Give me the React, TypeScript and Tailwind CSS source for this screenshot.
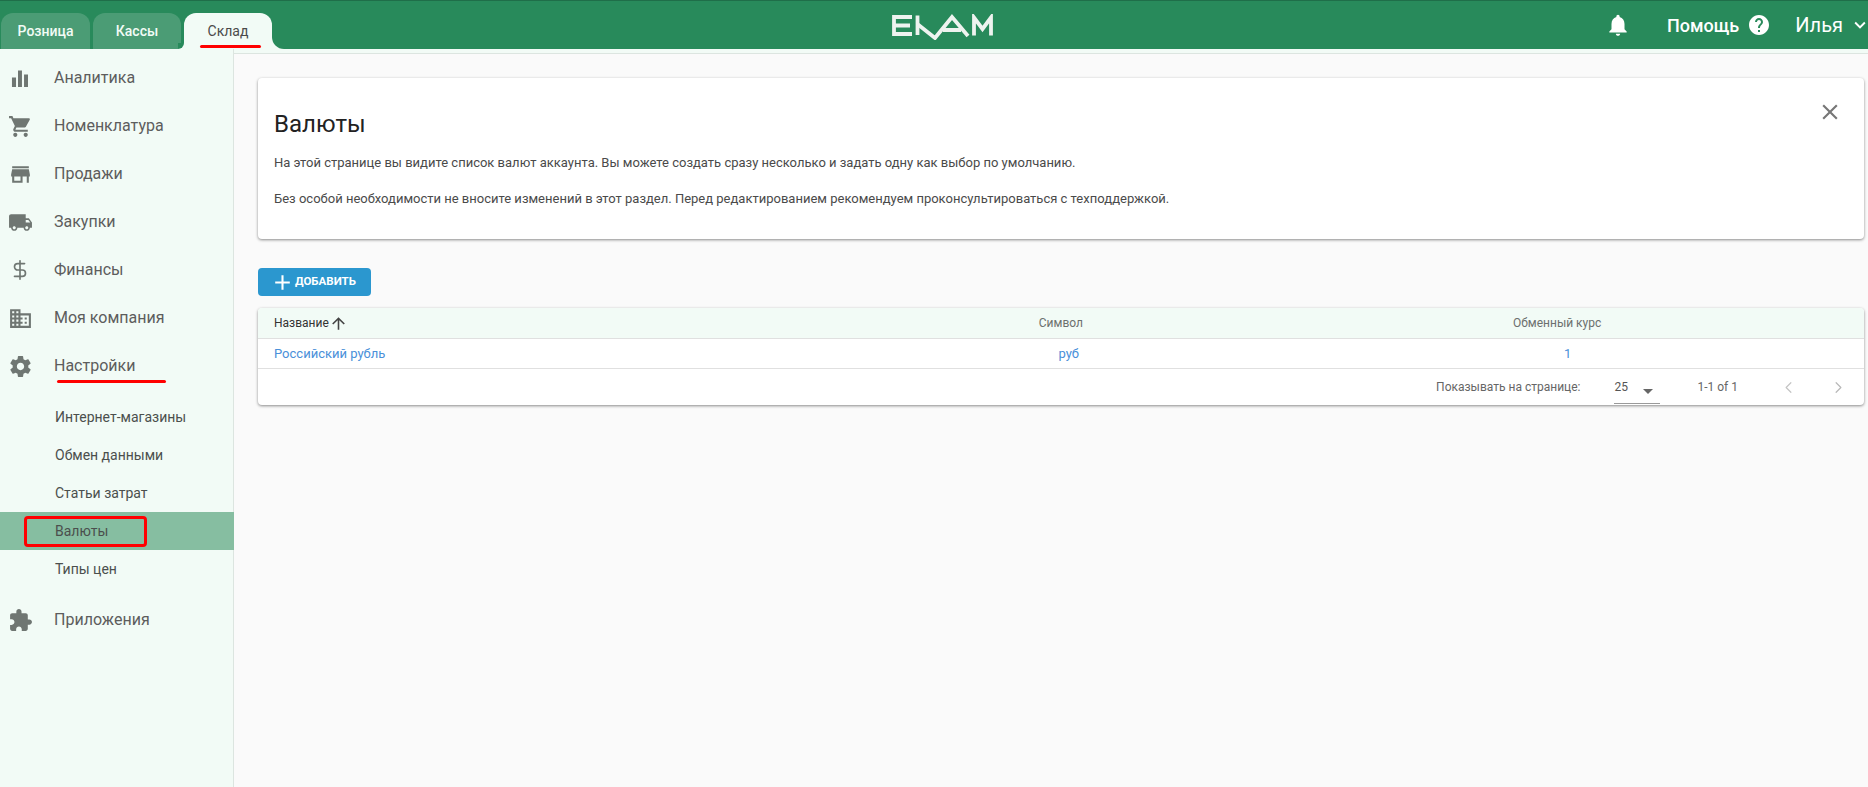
import React from "react";
import { ChevronLeft, ChevronRight, DollarSign } from "lucide-react";

const P = ({ d, className = "" }: { d: string; className?: string }) => (
  <svg viewBox="0 0 24 24" className={"w-6 h-6 fill-current " + className}><path d={d} /></svg>
);

const icons = {
  chart: "M3.8 11h3.9v9.1H3.8zM9.6 4.3h3.8v15.8H9.6zM15.4 8.2h3.8v11.9h-3.8z",
  cart: "M7 18c-1.1 0-1.99.9-1.99 2S5.9 22 7 22s2-.9 2-2-.9-2-2-2zM1 2v2h2l3.6 7.59-1.35 2.45c-.16.28-.25.61-.25.96 0 1.1.9 2 2 2h12v-2H7.42c-.14 0-.25-.11-.25-.25l.03-.12.9-1.63h7.45c.75 0 1.41-.41 1.75-1.03l3.58-6.49c.08-.14.12-.31.12-.48 0-.55-.45-1-1-1H5.21l-.94-2H1zm16 16c-1.1 0-1.99.9-1.99 2s.89 2 1.99 2 2-.9 2-2-.9-2-2-2z",
  store: "M20 4H4v2h16V4zm1 10v-2l-1-5H4l-1 5v2h1v6h10v-6h4v6h2v-6h1zm-9 4H6v-4h6v4z",
  truck: "M20 8h-3V4H3c-1.1 0-2 .9-2 2v11h2c0 1.66 1.34 3 3 3s3-1.34 3-3h6c0 1.66 1.34 3 3 3s3-1.34 3-3h2v-5l-3-4zM6 18.5c-.83 0-1.5-.67-1.5-1.5s.67-1.5 1.5-1.5 1.5.67 1.5 1.5-.67 1.5-1.5 1.5zm13.5-9l1.96 2.5H17V9.5h2.5zm-1.5 9c-.83 0-1.5-.67-1.5-1.5s.67-1.5 1.5-1.5 1.5.67 1.5 1.5-.67 1.5-1.5 1.5z",
  domain: "M12 7V3H2v18h20V7H12zM6 19H4v-2h2v2zm0-4H4v-2h2v2zm0-4H4V9h2v2zm0-4H4V5h2v2zm4 12H8v-2h2v2zm0-4H8v-2h2v2zm0-4H8V9h2v2zm0-4H8V5h2v2zm10 12h-8v-2h2v-2h-2v-2h2v-2h-2V9h8v10zm-2-8h-2v2h2v-2zm0 4h-2v2h2v-2z",
  gear: "M19.43 12.98c.04-.32.07-.64.07-.98s-.03-.66-.07-.98l2.11-1.65c.19-.15.24-.42.12-.64l-2-3.46c-.12-.22-.39-.3-.61-.22l-2.49 1c-.52-.4-1.08-.73-1.69-.98l-.38-2.65C14.46 2.18 14.25 2 14 2h-4c-.25 0-.46.18-.49.42l-.38 2.65c-.61.25-1.17.59-1.69.98l-2.49-1c-.23-.09-.49 0-.61.22l-2 3.46c-.13.22-.07.49.12.64l2.11 1.65c-.04.32-.07.65-.07.98s.03.66.07.98l-2.11 1.65c-.19.15-.24.42-.12.64l2 3.46c.12.22.39.3.61.22l2.49-1c.52.4 1.08.73 1.69.98l.38 2.65c.03.24.24.42.49.42h4c.25 0 .46-.18.49-.42l.38-2.65c.61-.25 1.17-.59 1.69-.98l2.49 1c.23.09.49 0 .61-.22l2-3.46c.12-.22.07-.49-.12-.64l-2.11-1.65zM12 15.5c-1.93 0-3.5-1.57-3.5-3.5s1.57-3.5 3.5-3.5 3.5 1.57 3.5 3.5-1.57 3.5-3.5 3.5z",
  puzzle: "M20.5 11H19V7c0-1.1-.9-2-2-2h-4V3.5C13 2.12 11.88 1 10.5 1S8 2.12 8 3.5V5H4c-1.1 0-1.99.9-1.99 2v3.8H3.5c1.49 0 2.7 1.21 2.7 2.7s-1.21 2.7-2.7 2.7H2V20c0 1.1.9 2 2 2h3.8v-1.5c0-1.49 1.21-2.7 2.7-2.7 1.49 0 2.7 1.21 2.7 2.7V22H17c1.1 0 2-.9 2-2v-4h1.5c1.38 0 2.5-1.12 2.5-2.5S21.88 11 20.5 11z",
  bell: "M12 22c1.1 0 2-.9 2-2h-4c0 1.1.89 2 2 2zm6-6v-5c0-3.07-1.64-5.64-4.5-6.32V4c0-.83-.67-1.5-1.5-1.5s-1.5.67-1.5 1.5v.68C7.63 5.36 6 7.92 6 11v5l-2 2v1h16v-1l-2-2z",
  help: "M12 2C6.48 2 2 6.48 2 12s4.48 10 10 10 10-4.48 10-10S17.52 2 12 2zm1 17h-2v-2h2v2zm2.07-7.75l-.9.92C13.45 12.9 13 13.5 13 15h-2v-.5c0-1.1.45-2.1 1.17-2.83l1.24-1.26c.37-.36.59-.86.59-1.41 0-1.1-.9-2-2-2s-2 .9-2 2H8c0-2.21 1.79-4 4-4s4 1.79 4 4c0 .88-.36 1.68-.93 2.25z",
  expand: "M16.59 8.59L12 13.17 7.41 8.59 6 10l6 6 6-6z",
  close: "M19 6.41L17.59 5 12 10.59 6.41 5 5 6.41 10.59 12 5 17.59 6.41 19 12 13.41 17.59 19 19 17.59 13.41 12z",
  add: "M19 13h-6v6h-2v-6H5v-2h6V5h2v6h6v2z",
  up: "M4 12l1.41 1.41L11 7.83V20h2V7.83l5.58 5.59L20 12l-8-8-8 8z",
};

const Row = ({ icon, label }: { icon: React.ReactNode; label: string }) => (
  <div className="h-12 flex items-center text-[#5d5d5d]">
    <div className="w-[54px] pl-2 shrink-0 flex text-[#6f7672]">{icon}</div>
    <span className="text-base">{label}</span>
  </div>
);

const Main = ({ icon, label }: { icon: string; label: string }) => (
  <Row icon={<P d={icon} className="w-[25px] h-[25px]" />} label={label} />
);

const Sub = ({ label, active }: { label: string; active?: boolean }) => (
  <div className={"h-[38px] flex items-center pl-[55px] text-sm text-[#4b4f4d] " + (active ? "bg-[#86bea1] -mr-px" : "")}>{label}</div>
);

const Tab = ({ label, active, wide }: { label: string; active?: boolean; wide?: boolean }) => (
  <div className={"h-9 rounded-t-xl flex items-center justify-center text-sm relative " + (wide ? "w-[89px] " : "w-[88px] ") + (active ? "bg-[#f2fbf6] text-[#4a4a4a]" : "bg-[#4b9c75] text-[#f2fbf6] font-medium")}>
    {label}
  </div>
);

export default function App() {
  return (
    <div className="w-[1868px] h-[787px] overflow-hidden flex flex-col bg-[#f2fbf6] font-['Roboto',sans-serif] relative">
      <header className="h-[49px] shrink-0 bg-[#288a5b] border-t border-[#1f6e49] flex items-end relative text-white">
        <div className="flex gap-[3px] pl-px">
          <Tab label="Розница" wide />
          <Tab label="Кассы" />
          <div className="relative">
            <Tab label="Склад" active />
            <div className="absolute right-[-12px] bottom-0 w-3 h-3 bg-[#f2fbf6]"><div className="w-3 h-3 bg-[#288a5b] rounded-bl-xl" /></div>
            <div className="absolute left-[-6px] bottom-0 w-1.5 h-1.5 bg-[#f2fbf6]"><div className="w-1.5 h-1.5 bg-[#288a5b] rounded-br-md" /></div>
          </div>
        </div>
        <div className="flex-1" />
        <div className="flex items-center h-12 -mr-[3px]">
          <P d={icons.bell} className="mr-9 w-[26px] h-[26px]" />
          <span className="text-[18px] font-medium">Помощь</span>
          <P d={icons.help} className="ml-2 mr-6" />
          <span className="font-normal text-[20px]">Илья</span>
          <P d={icons.expand} className="ml-[6px] w-[22px] h-[22px]" />
        </div>
        <svg viewBox="0 0 102 26" className="absolute left-[891px] top-[13px] w-[102px] h-[26px]" fill="none" stroke="#eef3ef" strokeWidth="3.8">
          <path d="M21 3H3v17h18M3 11.5h16" />
          <path d="M26.5 1.5v19.5" />
          <path d="M27 10.5l17 13.5L61 3l16 19M52 16h18" />
          <path d="M83 21.5V3.5L91.5 15 100 3.5v18" />
        </svg>
      </header>

      <div className="flex flex-1 min-h-0">
        <aside className="w-[234px] shrink-0 border-r border-[#dce5e0] pt-[5px] bg-[#f2fbf6]">
          <Main icon={icons.chart} label="Аналитика" />
          <Main icon={icons.cart} label="Номенклатура" />
          <Main icon={icons.store} label="Продажи" />
          <Main icon={icons.truck} label="Закупки" />
          <Row icon={<DollarSign className="w-[22px] h-[22px] ml-[1px]" strokeWidth={1.8} />} label="Финансы" />
          <Main icon={icons.domain} label="Моя компания" />
          <Main icon={icons.gear} label="Настройки" />
          <div className="pt-2 pb-2">
            <Sub label="Интернет-магазины" />
            <Sub label="Обмен данными" />
            <Sub label="Статьи затрат" />
            <Sub label="Валюты" active />
            <Sub label="Типы цен" />
          </div>
          <Main icon={icons.puzzle} label="Приложения" />
        </aside>

        <div className="flex-1 min-w-0 flex flex-col">
          <div className="h-[5px] shrink-0 border-b border-[#dce5e0]" />
          <main className="flex-1 bg-[#fafafa] pl-6 pr-1 pt-6">
            <section className="h-[161px] bg-white rounded shadow-[0_1px_3px_rgba(0,0,0,0.45)] px-4 relative">
              <h1 className="text-[24px] leading-8 font-normal text-[#222] pt-[30px] box-content">Валюты</h1>
              <p className="text-[13px] leading-5 text-[#4a4a4a] mt-[13px]">На этой странице вы видите список валют аккаунта. Вы можете создать сразу несколько и задать одну как выбор по умолчанию.</p>
              <p className="text-[13px] leading-5 text-[#4a4a4a] mt-4">Без особой необходимости не вносите изменений в этот раздел. Перед редактированием рекомендуем проконсультироваться с техподдержкой.</p>
              <P d={icons.close} className="absolute right-[21px] top-[21px] w-[26px] h-[26px] text-[#777]" />
            </section>

            <button className="mt-[29px] w-[113px] h-[28px] rounded-sm bg-[#2b97cf] text-white text-[11.5px] font-bold flex items-center pl-[12px] gap-0">
              <P d={icons.add} className="w-[25px] h-[25px] shrink-0" />
              <span>ДОБАВИТЬ</span>
            </button>

            <section className="mt-3 bg-white rounded shadow-[0_1px_3px_rgba(0,0,0,0.45)] text-xs">
              <div className="h-[31px] rounded-t bg-[#f2fbf6] border-b border-[#e0e0e0] grid grid-cols-[500px_325px_1fr] items-center text-[#6c706e]">
                <div className="pl-4 flex items-center text-[#333]">Название<P d={icons.up} className="w-[19px] h-[19px] text-[#444]" /></div>
                <div className="text-right">Символ</div>
                <div className="pl-[430px]">Обменный курс</div>
              </div>
              <div className="h-[30px] border-b border-[#e0e0e0] grid grid-cols-[500px_325px_1fr] items-center text-[#4a90d9] text-[13px]">
                <div className="pl-4">Российский рубль</div>
                <div className="text-right pr-1">руб</div>
                <div className="pl-[481px]">1</div>
              </div>
              <div className="h-[36px] flex items-center justify-end text-[#666] text-xs">
                <span>Показывать на странице:</span>
                <div className="ml-[34px] w-[46px] h-[33px] border-b border-[#9a9a9a] flex items-center relative">
                  <span className="text-[#555]">25</span>
                  <div className="absolute left-[29px] top-[18px] w-0 h-0 border-x-[5px] border-x-transparent border-t-[5px] border-t-[#666]" />
                </div>
                <span className="ml-[37px]">1-1 of 1</span>
                <ChevronLeft className="ml-[41px] w-[19px] h-[19px] text-[#c4c4c4]" strokeWidth={1.5} />
                <ChevronRight className="ml-[31px] mr-[16px] w-[19px] h-[19px] text-[#b8b8b8]" strokeWidth={1.5} />
              </div>
            </section>
          </main>
        </div>
      </div>

      {/* hand-drawn red annotations lying over the page */}
      <div className="absolute left-[200px] top-[45px] w-[61px] h-[3px] rounded-full bg-[#f00]" />
      <div className="absolute left-[57px] top-[380px] w-[109px] h-[3px] rounded-full bg-[#f00]" />
      <div className="absolute left-[24px] top-[516px] w-[123px] h-[31px] border-[3px] border-[#f00] rounded-sm" />
    </div>
  );
}
